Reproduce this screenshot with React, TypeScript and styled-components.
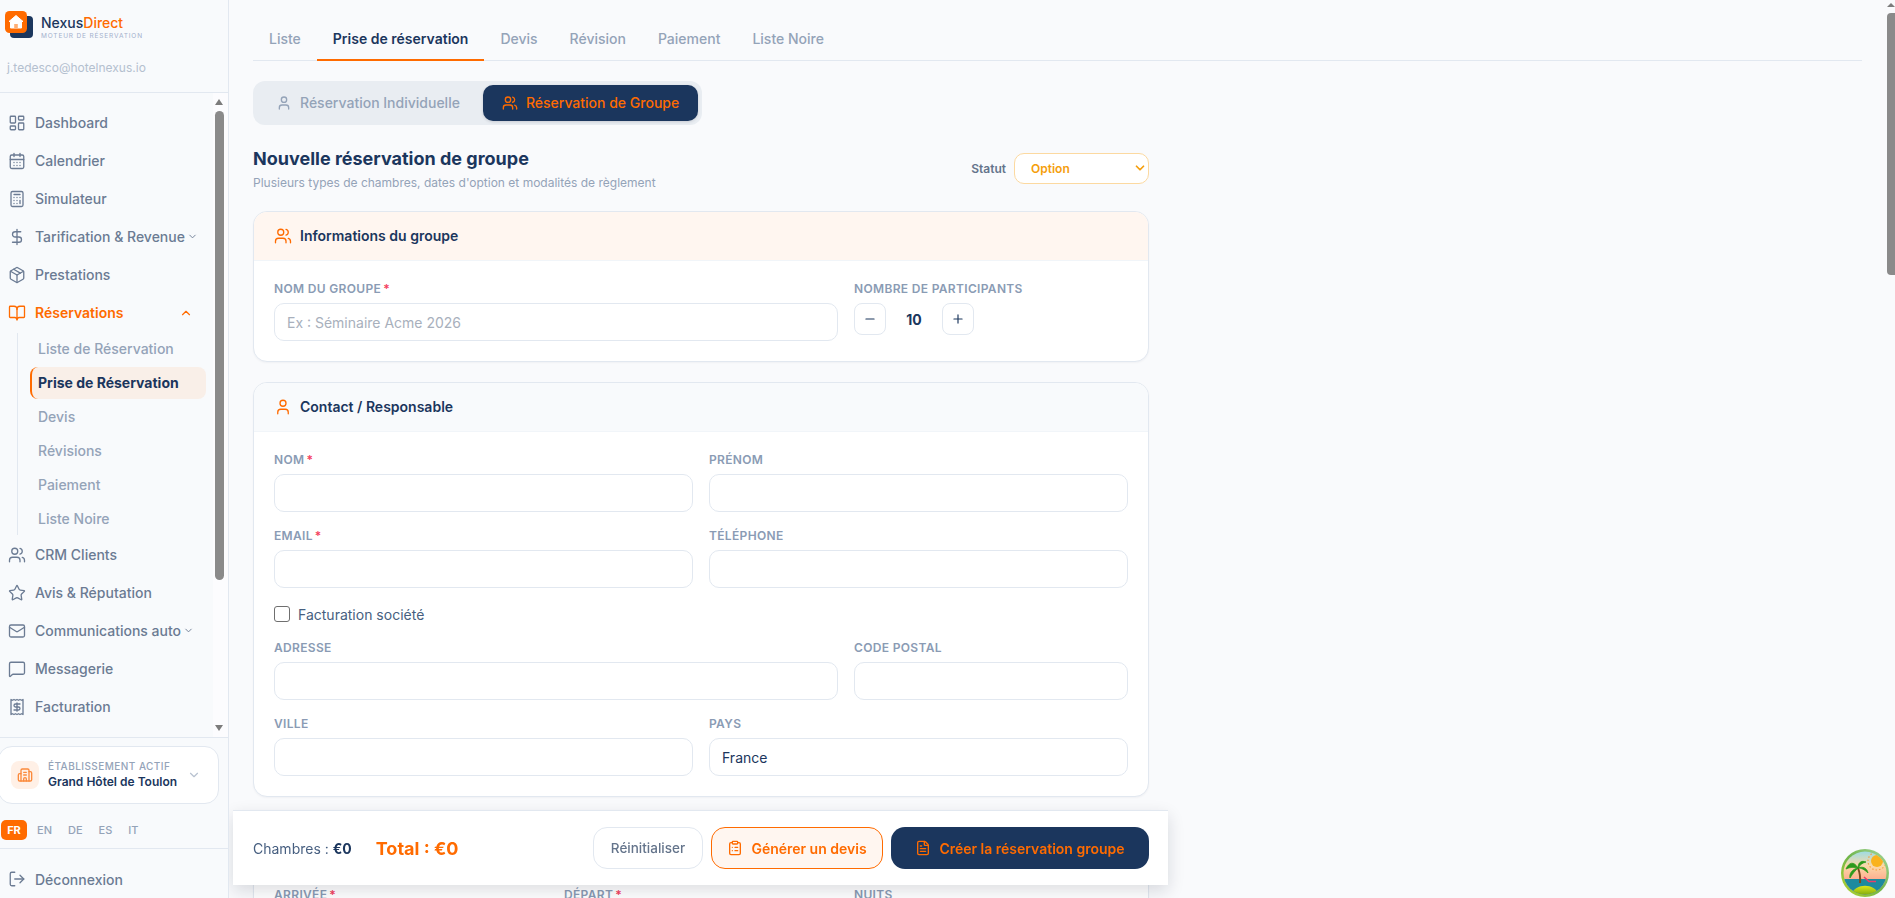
import styled, { createGlobalStyle } from "styled-components";
import {
  LayoutDashboard, CalendarDays, Calculator, DollarSign, Package, BookOpen, Users, Star, Mail,
  MessageSquare, Receipt, Building2, ChevronDown, ChevronUp, LogOut, User, ClipboardList, FileText,
  Minus, Plus,
} from "lucide-react";

const navy = "#1b365d";
const orange = "#ff6b00";

const GlobalStyle = createGlobalStyle`
  html, body { margin: 0; padding: 0; height: 100%; overflow: hidden; }
  body { font-family: Inter, "Noto Sans", sans-serif; background: #f9fafc; color: ${navy}; }
  * { box-sizing: border-box; }
`;

const topItems = [
  { label: "Dashboard", icon: LayoutDashboard },
  { label: "Calendrier", icon: CalendarDays },
  { label: "Simulateur", icon: Calculator },
  { label: "Tarification & Revenue", icon: DollarSign, more: true },
  { label: "Prestations", icon: Package },
];
const subItems = ["Liste de Réservation", "Prise de Réservation", "Devis", "Révisions", "Paiement", "Liste Noire"];
const lowItems = [
  { label: "CRM Clients", icon: Users },
  { label: "Avis & Réputation", icon: Star },
  { label: "Communications auto", icon: Mail, more: true },
  { label: "Messagerie", icon: MessageSquare },
  { label: "Facturation", icon: Receipt },
];
const tabs = ["Liste", "Prise de réservation", "Devis", "Révision", "Paiement", "Liste Noire"];

function Logo() {
  return (
    <svg width="34" height="39" viewBox="0 0 34 39">
      <rect x="10" y="16" width="23" height="22" rx="4" fill={navy} />
      <rect x="5" y="11" width="22" height="22" rx="4.5" fill={orange} />
      <path d="M16 15.5 L23 21.5 L21.5 21.5 L21.5 28 L10.5 28 L10.5 21.5 L9 21.5 Z" fill="#fff" stroke="#fff" strokeLinejoin="round" />
      <rect x="14.2" y="24" width="3.6" height="4" fill={orange} opacity="0.55" />
    </svg>
  );
}

function BeachBadge() {
  return (
    <svg width="48" height="48" viewBox="0 0 48 48">
      <defs>
        <linearGradient id="ring" x1="0" y1="1" x2="1" y2="0">
          <stop offset="0" stopColor="#b7d62c" />
          <stop offset="0.5" stopColor="#6fb54a" />
          <stop offset="1" stopColor="#a7d7a0" />
        </linearGradient>
        <linearGradient id="sky" x1="0" y1="0" x2="0" y2="1">
          <stop offset="0" stopColor="#8fdcec" />
          <stop offset="0.35" stopColor="#fbd9a8" />
          <stop offset="0.7" stopColor="#fda58a" />
        </linearGradient>
        <linearGradient id="hill" x1="0" y1="0" x2="0" y2="1">
          <stop offset="0" stopColor="#dfe61a" />
          <stop offset="1" stopColor="#6a9f0c" />
        </linearGradient>
        <clipPath id="disc"><circle cx="24" cy="24" r="21.5" /></clipPath>
      </defs>
      <circle cx="24" cy="24" r="24" fill="url(#ring)" />
      <g clipPath="url(#disc)">
        <rect width="48" height="48" fill="url(#sky)" />
        <circle cx="36" cy="12" r="6" fill="#f9b21d" />
        <circle cx="36" cy="12" r="9" fill="none" stroke="#f5a040" strokeWidth="1.2" strokeDasharray="1.5 2" />
        <rect y="30" width="48" height="18" fill="#1d8a9e" />
        <path d="M9 48 C13 33 35 33 39 48 Z" fill="url(#hill)" />
        <path d="M19 34 C19.5 29 19 24 17 19" stroke="#7a4a1e" strokeWidth="2" fill="none" />
        <path d="M17 19 C13 12 8 13 5 20 C9 18 13 18 17 19 C11 20 8 25 9 29 C12 24 14 22 17 19 C17 14 20 11 25 13 C21 14 19 16 17 19 C22 17 26 19 27 24 C23 20 20 19 17 19 Z" fill="#2c9a1c" stroke="#2c9a1c" strokeWidth="0.8" />
        <path d="M23 28 L28 32.5 L35 32.5" stroke="#e83e6b" strokeWidth="1.6" fill="none" />
      </g>
    </svg>
  );
}

export default function App() {
  return (
    <Shell>
      <GlobalStyle />
      <Sidebar>
        <Brand>
          <BrandRow>
            <Logo />
            <BrandText>
              <BrandName>Nexus<span>Direct</span></BrandName>
              <BrandTag>Moteur de réservation</BrandTag>
            </BrandText>
          </BrandRow>
          <UserMail>j.tedesco@hotelnexus.io</UserMail>
        </Brand>

        <Nav>
          {topItems.map(item => (
            <NavItem key={item.label}>
              <item.icon size={18} strokeWidth={1.75} />
              <NavLabel>{item.label}</NavLabel>
              {item.more && <ChevronDown size={11} />}
            </NavItem>
          ))}
          <NavItem $open>
            <BookOpen size={18} strokeWidth={1.75} />
            <NavLabel>Réservations</NavLabel>
            <OpenChevron><ChevronUp size={14} /></OpenChevron>
          </NavItem>
          <SubList>
            {subItems.map((s, i) => <SubItem key={s} $active={i === 1}>{s}</SubItem>)}
          </SubList>
          {lowItems.map(item => (
            <NavItem key={item.label}>
              <item.icon size={18} strokeWidth={1.75} />
              <NavLabel>{item.label}</NavLabel>
              {item.more && <ChevronDown size={11} />}
            </NavItem>
          ))}
          <NavRail>
            <RailArrow />
            <NavThumb />
            <RailArrow $down />
          </NavRail>
        </Nav>

        <Foot>
          <HotelCard>
            <HotelIcon><Building2 size={16} strokeWidth={2} /></HotelIcon>
            <HotelText>
              <HotelCaption>Établissement actif</HotelCaption>
              <HotelName>Grand Hôtel de Toulon</HotelName>
            </HotelText>
            <HotelChevron><ChevronDown size={14} /></HotelChevron>
          </HotelCard>
          <Langs>
            {["FR", "EN", "DE", "ES", "IT"].map((l, i) => <Lang key={l} $active={i === 0}>{l}</Lang>)}
          </Langs>
          <Logout>
            <LogOut size={18} strokeWidth={1.75} />
            <NavLabel>Déconnexion</NavLabel>
          </Logout>
        </Foot>
      </Sidebar>

      <Main>
        <Tabs>
          {tabs.map((t, i) => <Tab key={t} $active={i === 1}>{t}</Tab>)}
        </Tabs>
        <Column>
          <ModeSwitch>
            <ModeButton><User size={16} />Réservation Individuelle</ModeButton>
            <ModeButton $active><Users size={16} />Réservation de Groupe</ModeButton>
          </ModeSwitch>

          <TitleRow>
            <div>
              <PageTitle>Nouvelle réservation de groupe</PageTitle>
              <PageSub>Plusieurs types de chambres, dates d'option et modalités de règlement</PageSub>
            </div>
            <StatusBox>
              <StatusLabel>Statut</StatusLabel>
              <SelectWrap>
                <StatusSelect defaultValue="Option">
                  <option>Option</option>
                  <option>Confirmée</option>
                </StatusSelect>
                <SelectArrow><ChevronDown size={14} strokeWidth={3} /></SelectArrow>
              </SelectWrap>
            </StatusBox>
          </TitleRow>

          <Card>
            <CardHead $tint>
              <Users size={18} color={orange} strokeWidth={1.75} />
              <CardTitle>Informations du groupe</CardTitle>
            </CardHead>
            <CardBody>
              <Grid $cols={3}>
                <Field $span={2}>
                  <Label>Nom du groupe<Req>*</Req></Label>
                  <Input placeholder="Ex : Séminaire Acme 2026" />
                </Field>
                <Field>
                  <Label>Nombre de participants</Label>
                  <Stepper>
                    <StepButton><Minus size={14} /></StepButton>
                    <StepValue>10</StepValue>
                    <StepButton><Plus size={14} /></StepButton>
                  </Stepper>
                </Field>
              </Grid>
            </CardBody>
          </Card>

          <Card>
            <CardHead>
              <User size={18} color={orange} strokeWidth={1.75} />
              <CardTitle>Contact / Responsable</CardTitle>
            </CardHead>
            <CardBody>
              <Grid $cols={2}>
                <Field><Label>Nom<Req>*</Req></Label><Input /></Field>
                <Field><Label>Prénom</Label><Input /></Field>
                <Field><Label>Email<Req>*</Req></Label><Input /></Field>
                <Field><Label>Téléphone</Label><Input /></Field>
              </Grid>
              <CheckRow>
                <CheckBox type="checkbox" />
                Facturation société
              </CheckRow>
              <Grid $cols={3}>
                <Field $span={2}><Label>Adresse</Label><Input /></Field>
                <Field><Label>Code postal</Label><Input /></Field>
              </Grid>
              <Grid $cols={2}>
                <Field><Label>Ville</Label><Input /></Field>
                <Field><Label>Pays</Label><Input defaultValue="France" /></Field>
              </Grid>
            </CardBody>
          </Card>

          <Card>
            <CardHead>
              <CalendarDays size={18} color={orange} strokeWidth={1.75} />
              <CardTitle>Séjour</CardTitle>
            </CardHead>
            <CardBody>
              <Grid $cols={3}>
                <Field><Label>Arrivée<Req>*</Req></Label><Input /></Field>
                <Field><Label>Départ<Req>*</Req></Label><Input /></Field>
                <Field><Label>Nuits</Label><Input /></Field>
              </Grid>
            </CardBody>
          </Card>

          <ActionBar>
            <Totals>
              <RoomTotal>Chambres : <b>€0</b></RoomTotal>
              <GrandTotal>Total : €0</GrandTotal>
            </Totals>
            <Actions>
              <ResetButton>Réinitialiser</ResetButton>
              <QuoteButton><ClipboardList size={16} />Générer un devis</QuoteButton>
              <CreateButton><FileText size={16} />Créer la réservation groupe</CreateButton>
            </Actions>
          </ActionBar>
        </Column>
      </Main>

      <PageRail><PageArrow /><PageThumb /></PageRail>
      <Badge><BeachBadge /></Badge>
    </Shell>
  );
}

const Shell = styled.div`
  display: flex;
  width: 100%;
  height: 100vh;
  overflow: hidden;
  position: relative;
`;

const Sidebar = styled.aside`
  width: 229px;
  flex-shrink: 0;
  display: flex;
  flex-direction: column;
  height: 100%;
  background: #f8fafc;
  border-right: 1px solid #e2e8f0;
`;
const Brand = styled.div`
  height: 93px;
  flex-shrink: 0;
  border-bottom: 1px solid #e2e8f0;
`;
const BrandRow = styled.div`
  display: flex;
  height: 58px;
`;
const BrandText = styled.div`
  margin-left: 7px;
  padding-top: 14px;
`;
const BrandName = styled.div`
  font-size: 14px;
  font-weight: 500;
  line-height: 17px;
  color: ${navy};
  span { color: ${orange}; }
`;
const BrandTag = styled.div`
  font-size: 6.5px;
  line-height: 9px;
  margin-top: 1px;
  letter-spacing: 0.85px;
  text-transform: uppercase;
  white-space: nowrap;
  color: #a3b0cc;
`;
const UserMail = styled.div`
  padding-left: 7px;
  font-size: 12px;
  line-height: 20px;
  color: #b4c0cf;
`;

const Nav = styled.nav`
  flex: 1;
  min-height: 0;
  overflow: hidden;
  position: relative;
  padding-top: 11px;
`;
const NavItem = styled.div<{ $open?: boolean }>`
  display: flex;
  align-items: center;
  gap: 9px;
  height: 38px;
  width: 197px;
  padding: 0 4px 1px 8px;
  font-size: 14px;
  font-weight: ${p => (p.$open ? 600 : 500)};
  color: ${p => (p.$open ? orange : "#6b7b93")};
  white-space: nowrap;
  svg { flex-shrink: 0; }
  & > svg:last-child:not(:first-child) { margin-left: -7px; }
`;
const NavLabel = styled.span``;
const OpenChevron = styled.span`
  display: flex;
  margin-left: auto;
`;
const SubList = styled.div`
  display: flex;
  flex-direction: column;
  gap: 2px;
  margin: 1px 0 1px 17px;
  padding-left: 12px;
  width: 189px;
  border-left: 1px solid #e2e8f0;
`;
const SubItem = styled.div<{ $active?: boolean }>`
  height: 32px;
  display: flex;
  align-items: center;
  padding-left: ${p => (p.$active ? "6px" : "8px")};
  padding-bottom: 1px;
  font-size: 14px;
  font-weight: ${p => (p.$active ? 700 : 500)};
  color: ${p => (p.$active ? navy : "#94a3b8")};
  background: ${p => (p.$active ? "#f9efe8" : "transparent")};
  border-left: ${p => (p.$active ? `2px solid ${orange}` : "none")};
  border-radius: 8px;
  white-space: nowrap;
`;
const NavRail = styled.div`
  position: absolute;
  top: 0;
  right: 0;
  bottom: 0;
  width: 15px;
  padding-right: 3px;
  background: #fcfcfe;
  display: flex;
  flex-direction: column;
  align-items: center;
  justify-content: space-between;
  padding-top: 6px;
  padding-bottom: 6px;
`;
const RailArrow = styled.div<{ $down?: boolean }>`
  width: 0;
  height: 0;
  border-left: 4px solid transparent;
  border-right: 4px solid transparent;
  border-bottom: ${p => (p.$down ? "none" : "6px solid #7c7c7c")};
  border-top: ${p => (p.$down ? "6px solid #7c7c7c" : "none")};
  flex-shrink: 0;
`;
const NavThumb = styled.div`
  width: 9px;
  height: 469px;
  margin-top: 6px;
  margin-bottom: auto;
  border-radius: 5px;
  background: #8a8a8a;
`;

const Foot = styled.div`
  flex-shrink: 0;
  height: 161px;
  border-top: 1px solid #e2e8f0;
  padding-top: 8px;
`;
const HotelCard = styled.div`
  display: flex;
  align-items: center;
  height: 58px;
  width: 221px;
  margin-left: -2px;
  padding: 0 12px;
  background: #fff;
  border: 1px solid #e2e8f0;
  border-radius: 14px;
`;
const HotelIcon = styled.div`
  width: 28px;
  height: 28px;
  flex-shrink: 0;
  display: flex;
  align-items: center;
  justify-content: center;
  border-radius: 8px;
  background: #fff0e6;
  color: #fb8a3c;
`;
const HotelText = styled.div`
  margin-left: 9px;
  min-width: 0;
  flex: 1;
`;
const HotelCaption = styled.div`
  font-size: 10px;
  line-height: 14px;
  font-weight: 500;
  letter-spacing: 0.45px;
  text-transform: uppercase;
  white-space: nowrap;
  color: #94a3b8;
`;
const HotelName = styled.div`
  font-size: 12px;
  line-height: 18px;
  font-weight: 600;
  white-space: nowrap;
  color: ${navy};
`;
const HotelChevron = styled.span`
  display: flex;
  margin-right: 5px;
  color: #b8c2d0;
`;
const Langs = styled.div`
  display: flex;
  align-items: flex-end;
  height: 37px;
  margin-top: 8px;
  padding: 0 0 8px 1px;
  border-bottom: 1px solid #e2e8f0;
`;
const Lang = styled.span<{ $active?: boolean }>`
  height: 20px;
  min-width: ${p => (p.$active ? "26px" : "0")};
  padding: 0 ${p => (p.$active ? 0 : "8px")};
  margin-right: ${p => (p.$active ? "2px" : "0")};
  display: flex;
  align-items: center;
  justify-content: center;
  border-radius: 5px;
  font-size: 11px;
  font-weight: ${p => (p.$active ? 700 : 500)};
  color: ${p => (p.$active ? "#fff" : "#94a3b8")};
  background: ${p => (p.$active ? orange : "transparent")};
`;
const Logout = styled.div`
  display: flex;
  align-items: center;
  gap: 9px;
  height: 38px;
  margin-top: 11px;
  padding-left: 8px;
  font-size: 14px;
  font-weight: 500;
  color: #6b7b93;
`;

const Main = styled.main`
  flex: 1;
  min-width: 0;
  height: 100%;
  overflow: hidden;
  padding: 18px 33px 0 24px;
`;
const Tabs = styled.div`
  display: flex;
  height: 43px;
  border-bottom: 1px solid #e2e8f0;
`;
const Tab = styled.div<{ $active?: boolean }>`
  height: 43px;
  padding: 0 16px;
  display: flex;
  align-items: center;
  font-size: 14px;
  font-weight: ${p => (p.$active ? 600 : 500)};
  color: ${p => (p.$active ? navy : "#94a3b8")};
  border-bottom: 2px solid ${p => (p.$active ? orange : "transparent")};
`;
const Column = styled.div`
  width: 896px;
  padding-top: 20px;
  padding-bottom: 30px;
`;
const ModeSwitch = styled.div`
  display: inline-flex;
  gap: 4px;
  height: 44px;
  padding: 4px;
  background: #e9edf2;
  border-radius: 12px;
  vertical-align: top;
`;
const ModeButton = styled.div<{ $active?: boolean }>`
  display: flex;
  align-items: center;
  gap: 8px;
  padding: 0 19px 1px;
  border-radius: 10px;
  font-size: 14px;
  font-weight: 500;
  white-space: nowrap;
  color: ${p => (p.$active ? orange : "#94a3b8")};
  background: ${p => (p.$active ? navy : "transparent")};
  box-shadow: ${p => (p.$active ? "0 1px 3px rgba(15,23,42,.15)" : "none")};
`;
const TitleRow = styled.div`
  display: flex;
  align-items: center;
  justify-content: space-between;
  margin-top: 21px;
  margin-bottom: 20px;
`;
const PageTitle = styled.h1`
  margin: 0;
  font-size: 18px;
  line-height: 26px;
  font-weight: 700;
  color: ${navy};
`;
const PageSub = styled.p`
  margin: 3px 0 0;
  font-size: 12px;
  line-height: 16px;
  color: #94a3b8;
`;
const StatusBox = styled.div`
  display: flex;
  align-items: center;
  gap: 8px;
`;
const StatusLabel = styled.span`
  font-size: 12px;
  font-weight: 600;
  color: #64748b;
`;
const SelectWrap = styled.div`
  position: relative;
  width: 135px;
  height: 31px;
`;
const StatusSelect = styled.select`
  appearance: none;
  width: 100%;
  height: 100%;
  padding: 0 16px;
  background: #fff;
  border: 1px solid #fcd9a0;
  border-radius: 10px;
  font-family: inherit;
  font-size: 12px;
  font-weight: 600;
  color: #f59e0b;
`;
const SelectArrow = styled.span`
  position: absolute;
  top: 8px;
  right: 2px;
  display: flex;
  color: #f59e0b;
  pointer-events: none;
`;
const Card = styled.section`
  background: #fff;
  border: 1px solid #e2e8f0;
  border-radius: 14px;
  overflow: hidden;
  margin-bottom: 20px;
  box-shadow: 0 1px 2px rgba(15, 23, 42, 0.04);
`;
const CardHead = styled.div<{ $tint?: boolean }>`
  display: flex;
  align-items: center;
  gap: 8px;
  height: 49px;
  padding: 0 20px 1px;
  background: ${p => (p.$tint ? "#fff6f0" : "#f8fafc")};
  border-bottom: 1px solid #f1f5f9;
`;
const CardTitle = styled.h2`
  margin: 0;
  font-size: 14px;
  font-weight: 600;
  color: ${navy};
`;
const CardBody = styled.div`
  display: flex;
  flex-direction: column;
  gap: 16px;
  padding: 20px;
`;
const Grid = styled.div<{ $cols: number }>`
  display: grid;
  grid-template-columns: repeat(${p => p.$cols}, minmax(0, 1fr));
  gap: 16px;
`;
const Field = styled.div<{ $span?: number }>`
  grid-column: span ${p => p.$span || 1};
  min-width: 0;
`;
const Label = styled.label`
  display: block;
  height: 14px;
  margin-bottom: 8px;
  font-size: 12px;
  line-height: 16px;
  font-weight: 600;
  letter-spacing: 0.33px;
  text-transform: uppercase;
  color: #8a9bb4;
`;
const Req = styled.span`
  margin-left: 2px;
  color: #f43f5e;
`;
const Input = styled.input`
  display: block;
  width: 100%;
  height: 38px;
  padding: 0 12px;
  background: #fff;
  border: 1px solid #e2e8f0;
  border-radius: 10px;
  font-family: inherit;
  font-size: 14px;
  color: ${navy};
  &::placeholder { color: #a8b0bc; }
`;
const Stepper = styled.div`
  display: flex;
  align-items: center;
`;
const StepButton = styled.button`
  width: 32px;
  height: 32px;
  display: flex;
  align-items: center;
  justify-content: center;
  padding: 0;
  background: #fff;
  border: 1px solid #e2e8f0;
  border-radius: 8px;
  color: ${navy};
`;
const StepValue = styled.span`
  width: 56px;
  text-align: center;
  font-size: 14px;
  font-weight: 700;
  color: ${navy};
`;
const CheckRow = styled.label`
  display: flex;
  align-items: center;
  gap: 8px;
  height: 20px;
  font-size: 14px;
  color: #475f80;
`;
const CheckBox = styled.input`
  appearance: none;
  width: 16px;
  height: 16px;
  margin: 0;
  background: #fff;
  border: 1px solid #6f6f6f;
  border-radius: 3px;
`;
const ActionBar = styled.div`
  position: sticky;
  bottom: 13px;
  z-index: 5;
  display: flex;
  align-items: center;
  justify-content: space-between;
  height: 75px;
  margin: 0 -19px 0 -20px;
  padding: 0 19px 0 20px;
  background: #fff;
  border-top: 1px solid #e2e8f0;
  box-shadow: 0 6px 16px rgba(15, 23, 42, 0.14);
`;
const Totals = styled.div`
  display: flex;
  align-items: center;
  gap: 24px;
`;
const RoomTotal = styled.span`
  font-size: 14px;
  color: #475f80;
  b { font-weight: 700; color: ${navy}; }
`;
const GrandTotal = styled.span`
  font-size: 18px;
  font-weight: 700;
  color: ${orange};
`;
const Actions = styled.div`
  display: flex;
  gap: 8px;
`;
const ResetButton = styled.button`
  height: 42px;
  width: 110px;
  background: #fff;
  border: 1px solid #e2e8f0;
  border-radius: 14px;
  font-family: inherit;
  font-size: 13.5px;
  font-weight: 500;
  color: #64748b;
`;
const QuoteButton = styled.button`
  height: 42px;
  width: 172px;
  display: flex;
  align-items: center;
  justify-content: center;
  gap: 8px;
  background: #fff6f0;
  border: 1px solid ${orange};
  border-radius: 14px;
  font-family: inherit;
  font-size: 14px;
  font-weight: 600;
  color: ${orange};
`;
const CreateButton = styled.button`
  height: 42px;
  width: 258px;
  display: flex;
  align-items: center;
  justify-content: center;
  gap: 8px;
  background: ${navy};
  border: none;
  border-radius: 14px;
  font-family: inherit;
  font-size: 14px;
  font-weight: 600;
  color: ${orange};
`;

const PageRail = styled.div`
  position: absolute;
  top: 0;
  right: 0;
  bottom: 0;
  width: 8px;
  padding-top: 3px;
  display: flex;
  flex-direction: column;
  align-items: center;
`;
const PageArrow = styled.div`
  width: 0;
  height: 0;
  border-left: 4px solid transparent;
  border-right: 4px solid transparent;
  border-bottom: 4px solid #7c7c7c;
`;
const PageThumb = styled.div`
  width: 100%;
  height: 262px;
  margin-top: 6px;
  border-radius: 4px 0 0 4px;
  background: #8a8a8a;
`;
const Badge = styled.div`
  position: absolute;
  right: 6px;
  bottom: 1px;
  width: 48px;
  height: 48px;
  z-index: 6;
  svg { display: block; }
`;
